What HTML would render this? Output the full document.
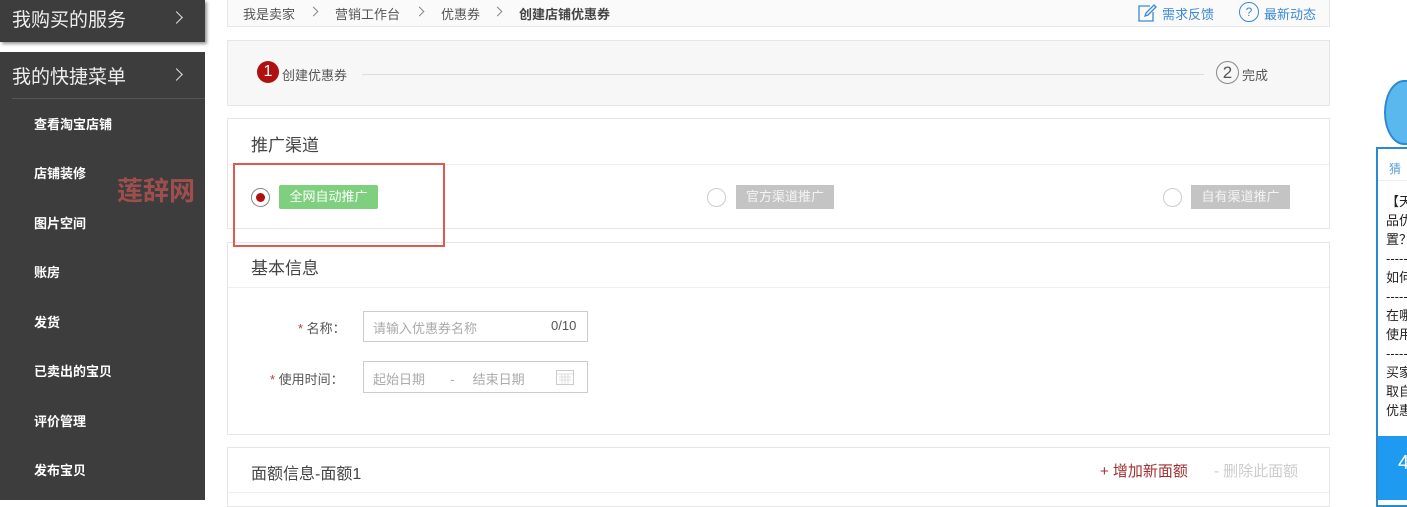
<!DOCTYPE html>
<html><head><meta charset="utf-8"><style>
*{margin:0;padding:0;box-sizing:border-box}
body{width:1407px;height:500px;overflow:hidden;background:#fff;font-family:"Liberation Sans","Noto Sans CJK SC",sans-serif;position:relative;color:#333}
.a{position:absolute}
.side{background:#3d3d3d;left:0;width:205px}
.mi{position:absolute;left:34px;color:#fff;font-size:13px;font-weight:bold}
.box{position:absolute;border:1px solid #e6e6e6;background:#fff}
.chev{position:absolute;left:172px;width:9px;height:9px;border-top:1.5px solid #ddd;border-right:1.5px solid #ddd;transform:rotate(45deg)}
.bc{position:absolute;top:4px;font-size:13px;color:#555}
.bs{position:absolute;top:8px;width:7px;height:7px;border-top:1px solid #888;border-right:1px solid #888;transform:rotate(45deg)}
</style></head><body>
<div class="a side" style="top:0;height:42px;box-shadow:2px 2px 3px #999"></div>
<div class="a" style="left:12px;top:5px;color:#eee;font-size:19px">我购买的服务</div>
<div class="chev" style="top:13px"></div>
<div class="a side" style="top:52px;height:448px"></div>
<div class="a" style="left:12px;top:62px;color:#eee;font-size:19px">我的快捷菜单</div>
<div class="chev" style="top:70px"></div>
<div class="a" style="left:12px;top:98px;width:193px;height:1px;background:#555"></div>
<div class="mi" style="top:114px">查看淘宝店铺</div>
<div class="mi" style="top:163px">店铺装修</div>
<div class="mi" style="top:213px">图片空间</div>
<div class="mi" style="top:262px">账房</div>
<div class="mi" style="top:312px">发货</div>
<div class="mi" style="top:361px">已卖出的宝贝</div>
<div class="mi" style="top:411px">评价管理</div>
<div class="mi" style="top:460px">发布宝贝</div>
<div class="a" style="left:117px;top:171px;color:rgba(225,90,90,.6);font-size:26px;font-weight:bold">莲辞网</div>

<div class="box" style="left:227px;top:-2px;width:1103px;height:29px;background:#fafafa"></div>
<div class="bc" style="left:243px">我是卖家</div>
<div class="bs" style="left:310px"></div>
<div class="bc" style="left:335px">营销工作台</div>
<div class="bs" style="left:416px"></div>
<div class="bc" style="left:441px">优惠券</div>
<div class="bs" style="left:494px"></div>
<div class="bc" style="left:519px;font-weight:bold;color:#444">创建店铺优惠券</div>
<svg class="a" style="left:1137px;top:4px" width="20" height="18" viewBox="0 0 20 18"><path d="M13 2H2v15h14V8" fill="none" stroke="#3a8ad6" stroke-width="1.3"/><path d="M8 12l1-3 8-8 2 2-8 8z" fill="none" stroke="#3a8ad6" stroke-width="1.3"/></svg>
<div class="a" style="left:1162px;top:4px;font-size:13px;color:#3a8ad6">需求反馈</div>
<div class="a" style="left:1239px;top:2px;width:20px;height:20px;border:1px solid #3a8ad6;border-radius:50%;color:#3a8ad6;font-size:12px;text-align:center;line-height:18px">?</div>
<div class="a" style="left:1264px;top:4px;font-size:13px;color:#3a8ad6">最新动态</div>

<div class="box" style="left:227px;top:40px;width:1103px;height:66px;background:#f7f7f7"></div>
<div class="a" style="left:257px;top:61px;width:22px;height:22px;border-radius:50%;background:#b01010;color:#fff;font-size:16px;text-align:center;line-height:22px">1</div>
<div class="a" style="left:282px;top:65px;font-size:13px;color:#555">创建优惠券</div>
<div class="a" style="left:362px;top:74px;width:842px;height:1px;background:#ddd"></div>
<div class="a" style="left:1216px;top:61px;width:23px;height:23px;border:1px solid #888;border-radius:50%;color:#555;font-size:17px;text-align:center;line-height:21px">2</div>
<div class="a" style="left:1242px;top:65px;font-size:13px;color:#555">完成</div>

<div class="box" style="left:227px;top:118px;width:1103px;height:111px"></div>
<div class="a" style="left:228px;top:164px;width:1101px;height:1px;background:#eee"></div>
<div class="a" style="left:251px;top:131px;font-size:17px;color:#444">推广渠道</div>
<div class="a" style="left:251px;top:188px;width:19px;height:19px;border:1px solid #888;border-radius:50%"></div>
<div class="a" style="left:256px;top:193px;width:9px;height:9px;border-radius:50%;background:#b01010"></div>
<div class="a" style="left:279px;top:185px;width:99px;height:24px;background:#7ed07e;color:#fff;font-size:13px;text-align:center;line-height:24px;border-radius:2px">全网自动推广</div>
<div class="a" style="left:707px;top:188px;width:19px;height:19px;border:1px solid #ccc;border-radius:50%"></div>
<div class="a" style="left:736px;top:185px;width:98px;height:24px;background:#c4c4c4;color:#f4f4f4;font-size:13px;text-align:center;line-height:24px">官方渠道推广</div>
<div class="a" style="left:1163px;top:188px;width:19px;height:19px;border:1px solid #ccc;border-radius:50%"></div>
<div class="a" style="left:1191px;top:185px;width:99px;height:24px;background:#c4c4c4;color:#f4f4f4;font-size:13px;text-align:center;line-height:24px">自有渠道推广</div>

<div class="box" style="left:227px;top:242px;width:1103px;height:193px"></div>
<div class="a" style="left:233px;top:163px;width:212px;height:84px;border:2px solid #e0584f"></div>
<div class="a" style="left:228px;top:287px;width:1101px;height:1px;background:#eee"></div>
<div class="a" style="left:251px;top:254px;font-size:17px;color:#444">基本信息</div>
<div class="a" style="left:298px;top:318px;font-size:13px;color:#555"><span style="color:#b04040">*</span> 名称：</div>
<div class="a" style="left:363px;top:311px;width:225px;height:31px;border:1px solid #ccc"></div>
<div class="a" style="left:373px;top:318px;font-size:13px;color:#aaa">请输入优惠券名称</div>
<div class="a" style="left:551px;top:318px;font-size:13px;color:#555">0/10</div>
<div class="a" style="left:270px;top:369px;font-size:13px;color:#555"><span style="color:#b04040">*</span> 使用时间：</div>
<div class="a" style="left:363px;top:361px;width:225px;height:32px;border:1px solid #ccc"></div>
<div class="a" style="left:373px;top:369px;font-size:13px;color:#aaa;white-space:pre">起始日期       -     结束日期</div>
<svg class="a" style="left:556px;top:369px" width="18" height="16" viewBox="0 0 18 16"><rect x="0.5" y="1.5" width="17" height="14" fill="none" stroke="#ccc"/><path d="M1 5h16M3 8h12M3 11h12M6 5v10M9 5v10M12 5v10" stroke="#ddd"/></svg>

<div class="box" style="left:227px;top:447px;width:1103px;height:60px"></div>
<div class="a" style="left:228px;top:492px;width:1101px;height:1px;background:#eee"></div>
<div class="a" style="left:251px;top:460px;font-size:16px;color:#444">面额信息-面额1</div>
<div class="a" style="left:1100px;top:460px;font-size:15px;color:#a03030">+ 增加新面额</div>
<div class="a" style="left:1214px;top:460px;font-size:15px;color:#ccc">- 删除此面额</div>

<div class="a" style="left:1384px;top:80px;width:40px;height:65px;border:2px solid #2a8ad0;background:#5bb8ef;border-radius:50% 0 0 50%"></div>
<div class="a" style="left:1376px;top:147px;width:40px;height:360px;border:2px solid #2a8ad0;border-right:none;background:#fff"></div>
<div class="a" style="left:1389px;top:160px;font-size:12px;color:#5aa0d8">猜</div>
<div class="a" style="left:1378px;top:180px;width:29px;height:1px;background:#eee"></div>
<div class="a" style="left:1386px;top:192px;font-size:13px;line-height:19px;color:#222">【天<br>品优<br>置？<br>------<br>如何<br>------<br>在哪<br>使用<br>------<br>买家<br>取自<br>优惠</div>
<div class="a" style="left:1378px;top:436px;width:29px;height:64px;background:#1e9bf0"></div>
<div class="a" style="left:1398px;top:452px;font-size:20px;color:#fff">4</div>
</body></html>
